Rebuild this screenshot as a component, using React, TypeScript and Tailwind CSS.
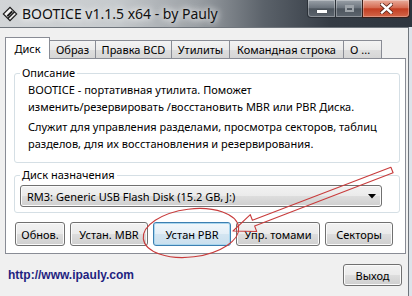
import React from "react";

function Btn({ className, children }: { className: string; children: React.ReactNode }) {
  return (
    <div
      className={`flex items-center justify-center rounded-[3px] border border-[#707070] bg-[linear-gradient(to_bottom,#f2f2f2_0%,#ebebeb_48%,#dddddd_52%,#cfcfcf_100%)] shadow-[inset_0_0_0_1px_#fbfbfb] text-[11px] leading-none text-black ${className}`}
    >
      {children}
    </div>
  );
}

function Tab({ className, children }: { className: string; children: React.ReactNode }) {
  return (
    <div
      className={`flex h-[18px] items-center justify-center border-t border-r border-[#898c95] bg-[linear-gradient(to_bottom,#f3f3f3_0%,#ebebeb_50%,#dedede_51%,#d6d6d6_100%)] text-[11px] leading-none text-black ${className}`}
    >
      {children}
    </div>
  );
}

export default function App() {
  return (
    <div className="relative h-[296px] w-[412px] overflow-hidden bg-[#dde3ea] font-['Noto_Sans',sans-serif] text-[11px] leading-none text-black">
      {/* Title bar */}
      <div className="flex h-[27px] items-start justify-between bg-[linear-gradient(to_right,#d2d5d7_0%,#c6cacd_28%,#9a9fa4_48%,#5b626a_64%,#353c45_80%,#2e353e_100%)]">
        <div className="flex items-center gap-[4px] pl-[2px] pt-[5px]">
          <svg width="16" height="16" viewBox="0 0 16 16">
            <polygon points="8,0.5 15.5,8 8,15.5 0.5,8" fill="#1c1c1c" />
            <polygon points="8,2.2 11.6,5.8 5.8,11.6 2.2,8" fill="#f4f4f4" />
            <polygon points="9.6,4.6 11,6 6,11 4.6,9.6" fill="#1c1c1c" />
            <polygon points="12.6,6.8 13.8,8 8,13.8 6.8,12.6" fill="#e8e8e8" />
          </svg>
          <span className="text-[14px] leading-[18px] text-[#111] [text-shadow:0_0_6px_#ffffff,0_0_10px_#ffffff]">
            BOOTICE v1.1.5 x64 - by Pauly
          </span>
        </div>
        <div className="mr-[2px] flex h-[18px]">
          <div className="flex h-[18px] w-[29px] items-center justify-center rounded-bl-[4px] border border-t-0 border-[#2b3138] bg-[linear-gradient(to_bottom,#9aa1a8_0%,#6d757e_45%,#4d555e_52%,#5d656e_100%)] shadow-[inset_0_0_0_1px_rgba(255,255,255,0.3)]">
            <div className="mt-[6px] h-[3px] w-[10px] bg-white shadow-[0_0_1px_#222]" />
          </div>
          <div className="flex h-[18px] w-[26px] items-center justify-center border-b border-[#2b3138] bg-[linear-gradient(to_bottom,#9aa1a8_0%,#6d757e_45%,#4d555e_52%,#5d656e_100%)] shadow-[inset_0_0_0_1px_rgba(255,255,255,0.3)]">
            <div className="h-[7px] w-[9px] border-[2px] border-t-[3px] border-[#9ea4aa]" />
          </div>
          <div className="flex h-[18px] w-[48px] items-center justify-center rounded-br-[4px] border border-t-0 border-[#3a1e18] bg-[linear-gradient(to_bottom,#e9ad9c_0%,#d66c52_45%,#c33e22_52%,#d4674a_100%)] shadow-[inset_0_0_0_1px_rgba(255,255,255,0.3)]">
            <svg width="13" height="11" viewBox="0 0 13 11">
              <path d="M2 1.5 L11 9.5 M11 1.5 L2 9.5" stroke="#5a2418" strokeWidth="4" strokeLinecap="square" />
              <path d="M2 1.5 L11 9.5 M11 1.5 L2 9.5" stroke="#ffffff" strokeWidth="2.4" strokeLinecap="square" />
            </svg>
          </div>
        </div>
      </div>

      {/* Client area */}
      <div className="flex h-[269px] w-[409px] flex-col border-t border-r border-[#6f757c] bg-[#f0f0f0]">
        {/* Tabs */}
        <div className="relative z-10 mt-[9px] flex h-[21px] items-end pl-[5px]">
          <div className="mb-[-1px] flex h-[22px] w-[45px] items-center justify-center border border-b-0 border-[#898c95] bg-white text-[11px] leading-none">
            Диск
          </div>
          <Tab className="w-[46px]">Образ</Tab>
          <Tab className="w-[76px]">Правка BCD</Tab>
          <Tab className="w-[58px]">Утилиты</Tab>
          <Tab className="w-[114px]">Командная строка</Tab>
          <Tab className="w-[38px] justify-start pl-[6px]">О ...</Tab>
        </div>

        {/* Panel */}
        <div className="ml-[5px] flex h-[196px] w-[401px] flex-col border border-[#898c95] bg-white pl-[8px] pr-[5px] pt-[6px]">
          <fieldset className="rounded-[3px] border border-[#d5dfe5] px-0 pb-[10px]">
            <legend className="ml-[5px] px-[2px] text-[11px] leading-[16px]">Описание</legend>
            <div className="whitespace-nowrap px-[13px] text-[11px] leading-[17px]">
              <p>
                BOOTICE - портативная утилита. Поможет
                <br />
                изменить/резервировать /восстановить MBR или PBR Диска.
              </p>
              <p className="mt-[3px]">
                Служит для управления разделами, просмотра секторов, таблиц
                <br />
                разделов, для их восстановления и резервирования.
              </p>
            </div>
          </fieldset>

          <fieldset className="mt-[4px] rounded-[3px] border border-[#d5dfe5] px-0 pb-[5px]">
            <legend className="ml-[5px] px-[2px] text-[11px] leading-[16px]">Диск назначения</legend>
            <div className="ml-[5px] mt-[2px] flex h-[22px] w-[362px] items-center justify-between rounded-[3px] border border-[#707070] bg-[linear-gradient(to_bottom,#f2f2f2_0%,#ebebeb_48%,#dddddd_52%,#cfcfcf_100%)] pl-[6px] pr-[5px] shadow-[inset_0_0_0_1px_#fbfbfb]">
              <span className="text-[11px]">RM3: Generic USB Flash Disk (15.2 GB, J:)</span>
              <svg width="8" height="5" viewBox="0 0 8 5">
                <polygon points="0,0 8,0 4,4.5" fill="#000" />
              </svg>
            </div>
          </fieldset>

          <div className="ml-[1px] mt-[9px] flex gap-[5px]">
            <Btn className="h-[24px] w-[50px]">Обнов.</Btn>
            <Btn className="h-[24px] w-[78px]">Устан. MBR</Btn>
            <div className="flex h-[24px] w-[78px] items-center justify-center rounded-[3px] border border-[#3c7fb1] bg-[linear-gradient(to_bottom,#f1f7fb_0%,#e4eff7_48%,#d3e5f1_52%,#c9dfee_100%)] text-[11px] leading-none shadow-[inset_0_0_0_1px_#a9d6ee]">
              Устан PBR
            </div>
            <Btn className="h-[24px] w-[84px]">Упр. томами</Btn>
            <Btn className="h-[24px] w-[68px]">Секторы</Btn>
          </div>
        </div>

        {/* Bottom row */}
        <div className="mt-[10px] flex h-[22px] items-center justify-between pl-[8px] pr-[6px]">
          <span className="font-['Liberation_Sans',Arial,sans-serif] text-[12px] font-bold text-[#1f1f80]">
            http://www.ipauly.com
          </span>
          <Btn className="h-[22px] w-[59px]">Выход</Btn>
        </div>
      </div>

      {/* Annotation overlay */}
      <svg className="pointer-events-none absolute left-0 top-0" width="412" height="296" viewBox="0 0 412 296">
        <ellipse cx="191" cy="233" rx="48" ry="24" transform="rotate(-7 191 233)" fill="none" stroke="#c83c3c" strokeWidth="1.1" />
        <polygon
          points="233,231 250.3,214.7 252.4,220.3 390.9,167.2 393.1,172.8 254.6,225.9 256.7,231.5"
          fill="none"
          stroke="#c83c3c"
          strokeWidth="1.1"
          strokeLinejoin="round"
        />
      </svg>
    </div>
  );
}
